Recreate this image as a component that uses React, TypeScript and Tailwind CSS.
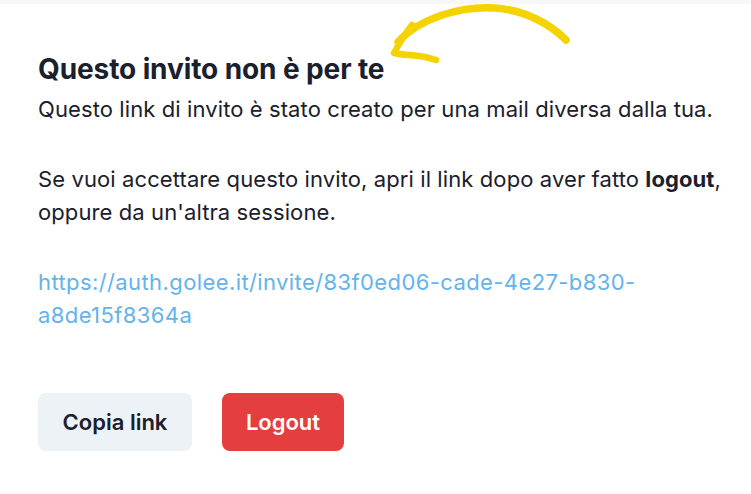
import { FC } from 'react';

const Arrow: FC = () => (
	<svg className="absolute left-[380px] top-0" width="200" height="70" viewBox="0 0 200 70" fill="none">
		<path d="M18 42 C 40 18, 80 6, 115 8 C 145 10, 170 24, 186 40" stroke="#f5d300" strokeWidth="7.5" strokeLinecap="round" />
		<path d="M32 25 C 26 32, 20 42, 14 53 C 26 56, 40 54, 56 60" stroke="#f5d300" strokeWidth="6.5" strokeLinecap="round" strokeLinejoin="round" />
	</svg>
);

const App: FC = () => {
	return (
		<div className="relative w-[751px] h-[494px] bg-white overflow-hidden" style={{ fontFamily: 'Inter, "Liberation Sans", sans-serif' }}>
			<div className="h-[4px] bg-[#f7f7f7]"></div>
			<Arrow />
			<div className="pl-[38px] pr-4 pt-[49px] text-[#1a202c]">
				<h2 className="text-[28px] leading-[32px] font-bold tracking-[-0.1px]">Questo invito non è per te</h2>
				<div className="mt-[8px] text-[22px] leading-[33px] tracking-[0.1px]">
					<p>Questo link di invito è stato creato per una mail diversa dalla tua.</p>
					<p className="mt-[37px]">
						Se vuoi accettare questo invito, apri il link dopo aver fatto <b className="font-bold">logout</b>,<br />
						oppure da un'altra sessione.
					</p>
					<p className="mt-[37px] text-[#63b3ed] tracking-[0.4px] whitespace-nowrap">
						https://auth.golee.it/invite/83f0ed06-cade-4e27-b830-<br />a8de15f8364a
					</p>
				</div>
				<div className="mt-[61px] flex gap-[30px]">
					<button className="h-[58px] w-[154px] rounded-[8px] bg-[#edf2f7] text-[22px] font-semibold text-[#1a202c]">Copia link</button>
					<button className="h-[58px] w-[122px] rounded-[8px] bg-[#e53e3e] text-[22px] font-semibold text-white">Logout</button>
				</div>
			</div>
		</div>
	);
};

export default App;
